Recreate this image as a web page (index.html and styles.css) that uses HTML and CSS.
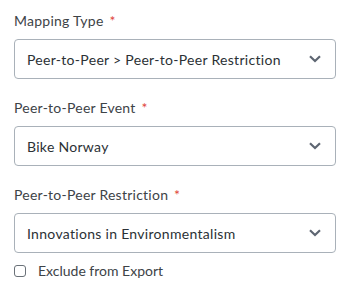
FILE: index.html
```html
<!DOCTYPE html>
<html>
<head>
<meta charset="utf-8">
<link rel="stylesheet" href="styles.css">
</head>
<body>
<div class="form">
  <div class="field">
    <div class="label">Mapping Type <span class="req">*</span></div>
    <div class="select">
      <span class="value">Peer-to-Peer &gt; Peer-to-Peer Restriction</span>
      <svg class="chev" width="12" height="8" viewBox="0 0 12 8"><path d="M1 1.2 L6 6 L11 1.2" fill="none" stroke="#5e6672" stroke-width="2.2"/></svg>
    </div>
  </div>
  <div class="field">
    <div class="label">Peer-to-Peer Event <span class="req">*</span></div>
    <div class="select">
      <span class="value">Bike Norway</span>
      <svg class="chev" width="12" height="8" viewBox="0 0 12 8"><path d="M1 1.2 L6 6 L11 1.2" fill="none" stroke="#5e6672" stroke-width="2.2"/></svg>
    </div>
  </div>
  <div class="field last">
    <div class="label">Peer-to-Peer Restriction <span class="req">*</span></div>
    <div class="select">
      <span class="value">Innovations in Environmentalism</span>
      <svg class="chev" width="12" height="8" viewBox="0 0 12 8"><path d="M1 1.2 L6 6 L11 1.2" fill="none" stroke="#5e6672" stroke-width="2.2"/></svg>
    </div>
  </div>
  <label class="check">
    <span class="box"></span>
    <span class="check-text">Exclude from Export</span>
  </label>
</div>
</body>
</html>
```
FILE: styles.css
```css
html, body {
  margin: 0;
  padding: 0;
  background: #ffffff;
}
body {
  font-family: Lato, "Open Sans", sans-serif;
  color: #333a40;
}
.form {
  padding: 11px 14px 0 14px;
  display: flex;
  flex-direction: column;
}
.field {
  display: flex;
  flex-direction: column;
  margin-bottom: 19px;
}
.field.last {
  margin-bottom: 9px;
}
.label {
  font-size: 14px;
  line-height: 20px;
  letter-spacing: 0.25px;
  color: #3d4347;
  margin-bottom: 8px;
}
.req {
  color: #e0453a;
  margin-left: 2px;
}
.select {
  box-sizing: border-box;
  height: 40px;
  border: 1px solid #a9b1b9;
  border-radius: 4px;
  display: flex;
  align-items: center;
  justify-content: space-between;
  padding: 0 14px 0 12px;
}
.value {
  font-size: 14px;
  letter-spacing: 0.3px;
  color: #2b3135;
}
.chev {
  display: block;
}
.check {
  display: flex;
  align-items: center;
  gap: 12px;
}
.box {
  box-sizing: border-box;
  width: 12px;
  height: 12px;
  border: 1px solid #6a7178;
  border-radius: 3px;
}
.check-text {
  font-size: 14px;
  color: #3d4347;
}
```
